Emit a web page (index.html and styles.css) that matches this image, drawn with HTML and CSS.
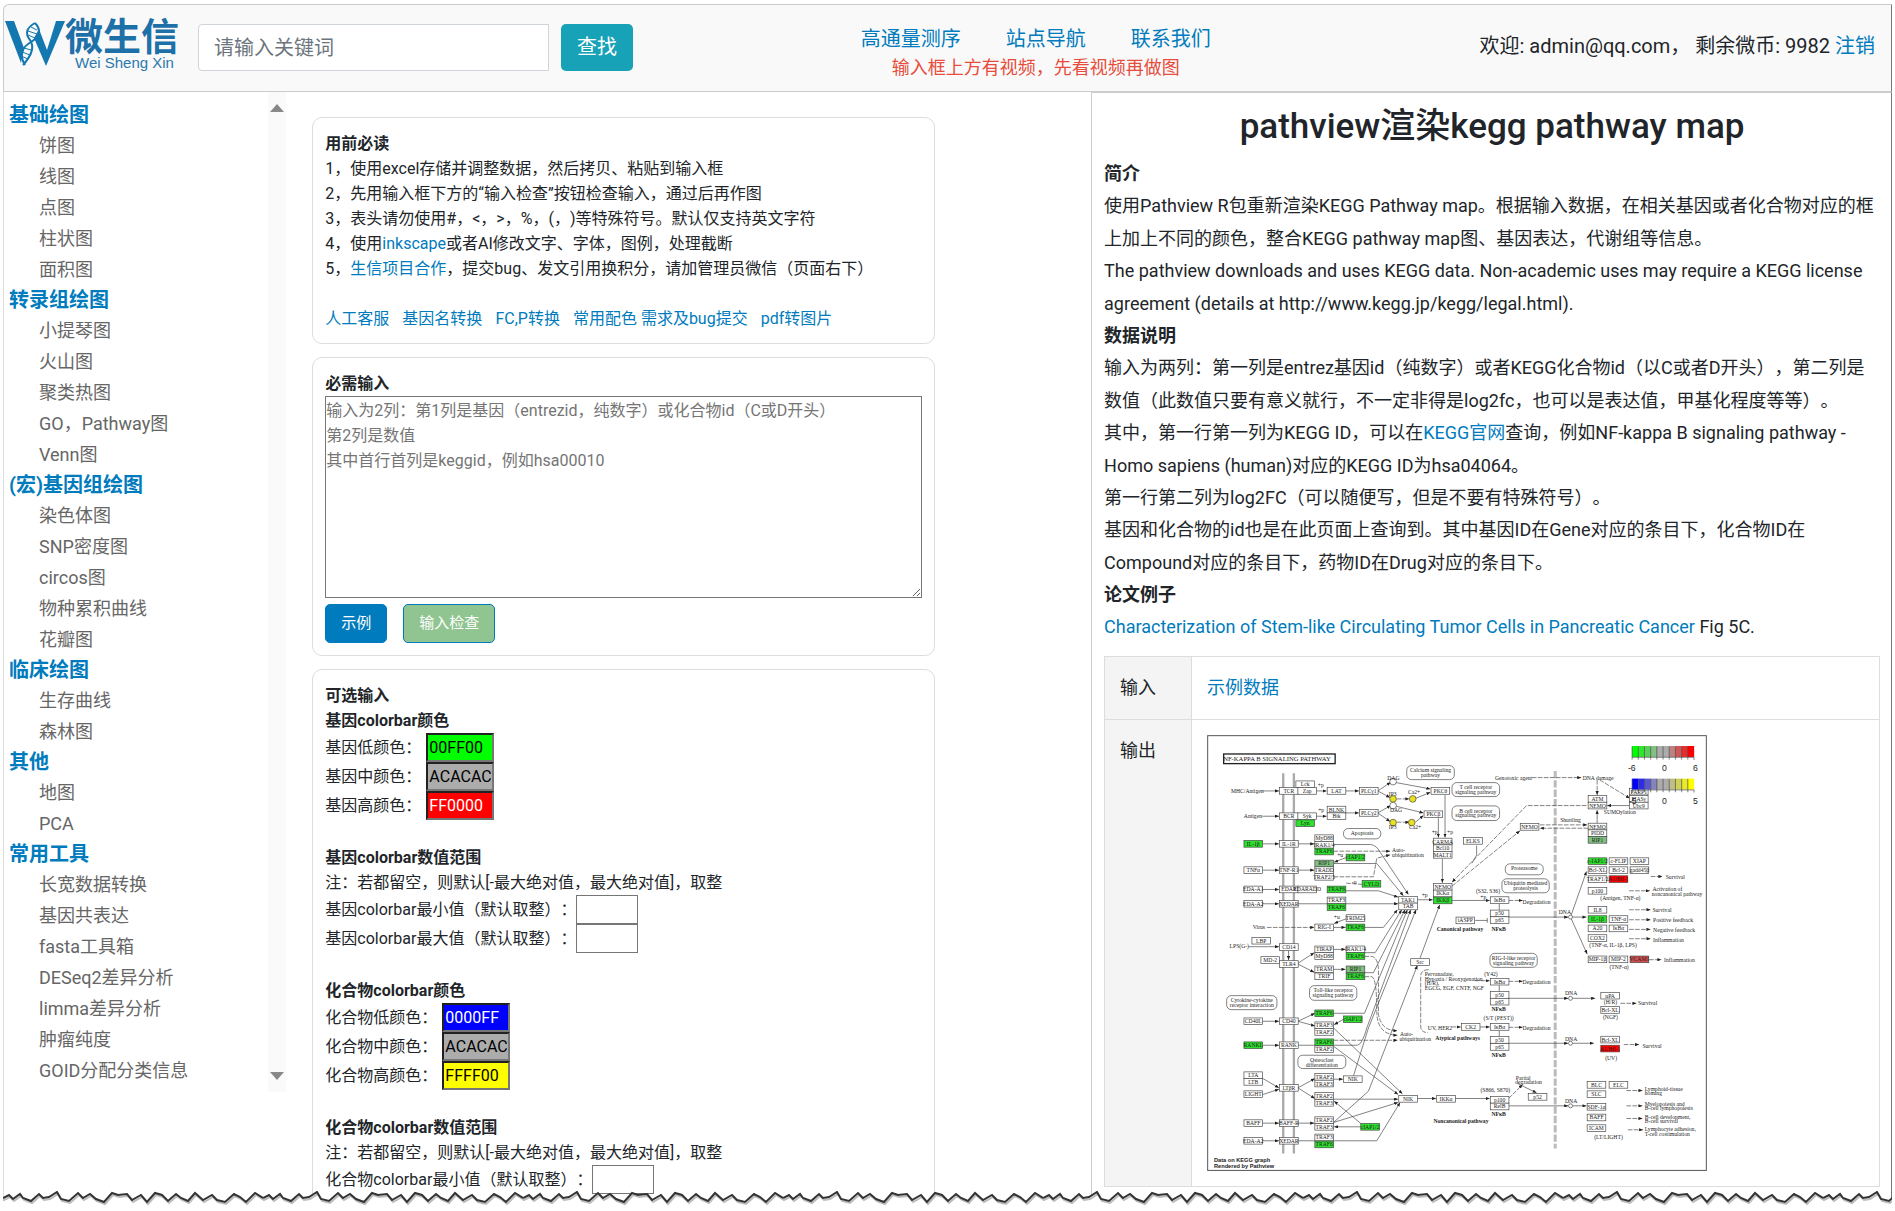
FILE: index.html
```html
<!DOCTYPE html>
<html lang="zh-CN">
<head>
<meta charset="utf-8">
<title>pathview渲染kegg pathway map</title>
<link rel="stylesheet" href="styles.css">
</head>

<body>
<header class="header">
	<a href="#" class="logo">
		<svg width="178" height="72" viewBox="0 -11 178 72" role="img" aria-label="微生信">
			<path class="logo-w" d="M1 5h9l10 27-3 15zM35 13l8 21L52 5h9L42 50 30 22z"/>
			<path class="logo-line" d="M31 7c-9 5-10 11-5 17 5 7 2 15-7 25M31 7c7 7 4 14-4 19-9 5-12 13-6 23"/>
			<path class="logo-rung" d="M27 11l6 3M24 15l9 3M24 19l7 3M20 32l7 2M18 36l8 3M17 40l7 3M18 45l4 2"/>
			<text class="logo-cn" x="61" y="34">微生信</text>
			<text class="logo-en" x="71" y="52">Wei Sheng Xin</text>
		</svg>
	</a>
	<form class="search">
		<input type="text" class="search-input" placeholder="请输入关键词" aria-label="请输入关键词">
		<button type="button" class="search-btn">查找</button>
	</form>
	<nav class="nav">
		<div class="nav-links">
			<a href="#">高通量测序</a>
			<a href="#">站点导航</a>
			<a href="#">联系我们</a>
		</div>
		<p class="nav-tip">输入框上方有视频，先看视频再做图</p>
	</nav>
	<div class="user">欢迎: admin@qq.com， 剩余微币: 9982 <a href="#">注销</a></div>
</header>

<div class="main">
	<aside class="side">
		<div class="menu">
			<h2>基础绘图</h2>
			<ul>
				<li><a href="#">饼图</a></li>
				<li><a href="#">线图</a></li>
				<li><a href="#">点图</a></li>
				<li><a href="#">柱状图</a></li>
				<li><a href="#">面积图</a></li>
			</ul>
			<h2>转录组绘图</h2>
			<ul>
				<li><a href="#">小提琴图</a></li>
				<li><a href="#">火山图</a></li>
				<li><a href="#">聚类热图</a></li>
				<li><a href="#">GO，Pathway图</a></li>
				<li><a href="#">Venn图</a></li>
			</ul>
			<h2>(宏)基因组绘图</h2>
			<ul>
				<li><a href="#">染色体图</a></li>
				<li><a href="#">SNP密度图</a></li>
				<li><a href="#">circos图</a></li>
				<li><a href="#">物种累积曲线</a></li>
				<li><a href="#">花瓣图</a></li>
			</ul>
			<h2>临床绘图</h2>
			<ul>
				<li><a href="#">生存曲线</a></li>
				<li><a href="#">森林图</a></li>
			</ul>
			<h2>其他</h2>
			<ul>
				<li><a href="#">地图</a></li>
				<li><a href="#">PCA</a></li>
			</ul>
			<h2>常用工具</h2>
			<ul>
				<li><a href="#">长宽数据转换</a></li>
				<li><a href="#">基因共表达</a></li>
				<li><a href="#">fasta工具箱</a></li>
				<li><a href="#">DESeq2差异分析</a></li>
				<li><a href="#">limma差异分析</a></li>
				<li><a href="#">肿瘤纯度</a></li>
				<li><a href="#">GOID分配分类信息</a></li>
			</ul>
		</div>
		<div class="scroll">
			<svg width="14" height="8" viewBox="0 0 14 8"><path d="M0 8L7 0l7 8z"/></svg>
			<svg width="14" height="8" viewBox="0 0 14 8"><path d="M0 0l7 8 7-8z"/></svg>
		</div>
	</aside>

	<main class="work">
		<section class="card">
			<b>用前必读</b>
			<p>1，使用excel存储并调整数据，然后拷贝、粘贴到输入框</p>
			<p>2，先用输入框下方的“输入检查”按钮检查输入，通过后再作图</p>
			<p>3，表头请勿使用#，&lt;，&gt;，%，(，)等特殊符号。默认仅支持英文字符</p>
			<p>4，使用<a href="#">inkscape</a>或者AI修改文字、字体，图例，处理截断</p>
			<p>5，<a href="#">生信项目合作</a>，提交bug、发文引用换积分，请加管理员微信（页面右下）</p>
			<p class="tools">
				<a href="#">人工客服</a>
				<a href="#">基因名转换</a>
				<a href="#">FC,P转换</a>
				<span><a href="#">常用配色</a> <a href="#">需求及bug提交</a></span>
				<a href="#">pdf转图片</a>
			</p>
		</section>

		<section class="card">
			<label for="data"><b>必需输入</b></label>
			<textarea id="data" class="data" placeholder="输入为2列：第1列是基因（entrezid，纯数字）或化合物id（C或D开头）
第2列是数值
其中首行首列是keggid，例如hsa00010"></textarea>
			<div class="btns">
				<button type="button" class="btn">示例</button>
				<button type="button" class="btn btn-check">输入检查</button>
			</div>
		</section>

		<section class="card card-last">
			<b>可选输入</b>
			<b>基因colorbar颜色</b>
			<div class="row"><label for="g1">基因低颜色：</label><input id="g1" class="color green" value="00FF00"></div>
			<div class="row"><label for="g2">基因中颜色：</label><input id="g2" class="color gray" value="ACACAC"></div>
			<div class="row"><label for="g3">基因高颜色：</label><input id="g3" class="color red" value="FF0000"></div>

			<b class="gap">基因colorbar数值范围</b>
			<p>注：若都留空，则默认[-最大绝对值，最大绝对值]，取整</p>
			<div class="row"><label for="g4">基因colorbar最小值（默认取整）：</label><input id="g4" class="num"></div>
			<div class="row"><label for="g5">基因colorbar最大值（默认取整）：</label><input id="g5" class="num"></div>

			<b class="gap">化合物colorbar颜色</b>
			<div class="row"><label for="c1">化合物低颜色：</label><input id="c1" class="color blue" value="0000FF"></div>
			<div class="row"><label for="c2">化合物中颜色：</label><input id="c2" class="color gray" value="ACACAC"></div>
			<div class="row"><label for="c3">化合物高颜色：</label><input id="c3" class="color yellow" value="FFFF00"></div>

			<b class="gap">化合物colorbar数值范围</b>
			<p>注：若都留空，则默认[-最大绝对值，最大绝对值]，取整</p>
			<div class="row"><label for="c4">化合物colorbar最小值（默认取整）：</label><input id="c4" class="num"></div>
		</section>
	</main>

	<article class="doc">
		<h1>pathview渲染kegg pathway map</h1>
		<b>简介</b>
		<p>使用Pathview R包重新渲染KEGG Pathway map。根据输入数据，在相关基因或者化合物对应的框上加上不同的颜色，整合KEGG pathway map图、基因表达，代谢组等信息。</p>
		<p>The pathview downloads and uses KEGG data. Non-academic uses may require a KEGG license agreement (details at http://www.kegg.jp/kegg/legal.html).</p>
		<b>数据说明</b>
		<p>输入为两列：第一列是entrez基因id（纯数字）或者KEGG化合物id（以C或者D开头），第二列是数值（此数值只要有意义就行，不一定非得是log2fc，也可以是表达值，甲基化程度等等）。</p>
		<p>其中，第一行第一列为KEGG ID，可以在<a href="#">KEGG官网</a>查询，例如NF-kappa B signaling pathway -<br>Homo sapiens (human)对应的KEGG ID为hsa04064。</p>
		<p>第一行第二列为log2FC（可以随便写，但是不要有特殊符号）。</p>
		<p>基因和化合物的id也是在此页面上查询到。其中基因ID在Gene对应的条目下，化合物ID在<br>Compound对应的条目下，药物ID在Drug对应的条目下。</p>
		<b>论文例子</b>
		<p><a href="#">Characterization of Stem-like Circulating Tumor Cells in Pancreatic Cancer</a> Fig 5C.</p>
		<table class="io">
			<tr><th>输入</th><td><a href="#">示例数据</a></td></tr>
			<tr><th>输出</th><td><svg id="map" class="map" viewBox="20 20 1502 1310"></svg></td></tr>
		</table>
	</article>
</div>

<svg class="torn" width="100%" height="20">
	<defs>
		<pattern id="tear" width="260" height="20" patternUnits="userSpaceOnUse">
			<path class="torn-paper" d="M0 7l6-3 4 4 7-5 3 4 8 3 8-7 4 4 6-1 8-5 4 7 8 2 9-8 5 5 7-4 6 5 8 3 8-9 6 2 9-1 5 6 9-5 6 7 8-9 7 2 6 6 8-7 5 4 7 3 7-8 8 7 9-5 5 5 8 2 9-8 6 3 6 5 9-9 8 5v13H0z"/>
			<path class="torn-shade" transform="translate(1 2)" d="M-1 7H0l6-3 4 4 7-5 3 4 8 3 8-7 4 4 6-1 8-5 4 7 8 2 9-8 5 5 7-4 6 5 8 3 8-9 6 2 9-1 5 6 9-5 6 7 8-9 7 2 6 6 8-7 5 4 7 3 7-8 8 7 9-5 5 5 8 2 9-8 6 3 6 5 9-9 8 5"/>
			<path class="torn-line" d="M0 7l6-3 4 4 7-5 3 4 8 3 8-7 4 4 6-1 8-5 4 7 8 2 9-8 5 5 7-4 6 5 8 3 8-9 6 2 9-1 5 6 9-5 6 7 8-9 7 2 6 6 8-7 5 4 7 3 7-8 8 7 9-5 5 5 8 2 9-8 6 3 6 5 9-9 8 5"/>
		</pattern>
	</defs>
	<rect width="100%" height="20" fill="url(#tear)"/>
</svg>
<script src="map.js"></script>
</body>
</html>
```
FILE: styles.css
```css
* { box-sizing: border-box; }
body { margin: 0; padding: 4px 3px 0; height: 100vh; overflow: hidden; display: flex; flex-direction: column; position: relative; background: #fff; color: #212529; font: 16px/25px Roboto, "Noto Sans CJK SC", sans-serif; text-spacing-trim: space-all; }
a { color: #007bbd; text-decoration: none; }
h1, h2, p, ul { margin: 0; padding: 0; font-weight: normal; }
ul { list-style: none; }
b { display: block; }
input, button, textarea { font: inherit; }

.header { display: flex; align-items: flex-start; flex: none; height: 88px; padding-right: 16px; background: #f9f9f9; border: 1px solid #ccc; border-right-color: #777; border-radius: 6px 0 0 0; font-size: 20px; }
.logo { display: block; }
.logo svg { display: block; }
.logo-w { fill: #1478b0; }
.logo-line { fill: none; stroke: #1478b0; stroke-width: 2; }
.logo-rung { fill: none; stroke: #1478b0; stroke-width: 1; }
.logo-cn { font: bold 38px "Noto Sans CJK SC", sans-serif; fill: #1e70a8; }
.logo-en { font: 15px "Liberation Sans", sans-serif; fill: #2b78ad; }
.search { display: flex; gap: 12px; margin: 19px 0 0 16px; }
.search-input { width: 351px; height: 47px; padding: 0 15px; background: #fff; border: 1px solid #ced4da; border-radius: 4px 0 0 4px; }
.search-input::placeholder { color: #6c757d; }
.search-btn { width: 72px; height: 47px; padding: 0; border: 0; border-radius: 5px; background: #17a2b8; color: #fff; }
.nav { flex: 1; padding: 19px 41px 0 0; text-align: center; }
.nav-links { display: flex; justify-content: center; gap: 45px; line-height: 30px; }
.nav-tip { color: #e74c3c; font-size: 18px; line-height: 28px; }
.user { padding-top: 26px; line-height: 30px; white-space: nowrap; }

.main { flex: 1; display: flex; min-height: 0; }
.side { flex: 0 0 15%; display: flex; justify-content: space-between; align-items: flex-start; border-left: 1px solid #ddd; }
.menu { padding: 8px 0 0 5px; font-size: 18px; }
.menu h2 { color: #007bbd; font-size: 20px; font-weight: bold; line-height: 30px; }
.menu li { padding-left: 30px; line-height: 31px; }
.menu li a { color: #666; }
.scroll { display: flex; flex-direction: column; justify-content: space-between; align-items: center; width: 18px; height: 1000px; padding: 12px 0; background: #fafafa; }
.scroll svg { fill: #888; }

.work { flex: 1; min-width: 0; padding: 25px 0 0 26px; }
.card { width: 80%; margin-bottom: 13px; padding: 13px 12px 12px; border: 1px solid #ddd; border-radius: 10px; }
.card-last { padding-bottom: 60px; }
.card p { white-space: nowrap; }
.card .tools { display: flex; gap: 13px; margin-top: 25px; }
.card .data { display: block; width: 100%; height: 202px; padding: 1px 0; border: 1px solid #767676; background: #fff; }
.data::placeholder { color: #757575; }
.btns { display: flex; gap: 16px; margin-top: 6px; }
.btn { height: 39px; padding: 0 15px; border: 1px solid #007bbd; border-radius: 5px; background: #007bbd; color: #fff; font-size: 15px; }
.btn-check { background: #90c490; }
.row { display: flex; align-items: center; height: 29px; white-space: nowrap; }
.row input { height: 29px; padding: 0 1px; }
.color { width: 68px; margin-left: 5px; border: 2px inset #767676; color: #000; }
.num { width: 62px; border: 1px solid #767676; background: #fff; }
.green { background: #0f0; }
.gray { background: #acacac; }
.red { background: #f00; color: #fff; }
.blue { background: #00f; color: #fff; }
.yellow { background: #ff0; }
.gap { margin-top: 25px; }

.doc { flex: 0 0 42.4%; padding: 13px 11px 0 12px; border: 1px solid #ccc; border-right-color: #777; border-bottom: 0; font-size: 18px; }
.doc h1 { margin-bottom: 10px; font-size: 35px; font-weight: 500; line-height: 42px; text-align: center; }
.doc p, .doc b { line-height: 1.8; }
.io { width: 100%; margin-top: 12px; border-collapse: collapse; line-height: 32px; }
.io th, .io td { padding: 15px; border: 1px solid #ddd; text-align: left; vertical-align: top; }
.io th { width: 87px; background: #f4f4f4; font-weight: normal; }

.map { display: block; width: 500px; max-width: 100%; font-family: "Liberation Serif", serif; font-size: 17px; fill: #222; }
.map rect, .map circle { fill: #fff; stroke: #444; stroke-width: 2; }
.map .frame { stroke: #555; stroke-width: 3; }
.map .title { stroke: #222; stroke-width: 4; }
.map .heading { font-size: 20px; }
.map .g { fill: #2de02d; }
.map .d { fill: #7fbf7f; }
.map .r { fill: #f00; }
.map .p { fill: #d05050; }
.map .y { fill: #e8e020; }
.map text { text-anchor: middle; }
.map .s { text-anchor: start; }
.map .bold { font-weight: bold; }
.map .credit { text-anchor: start; font: bold 17px "Liberation Sans", sans-serif; }
.map .scale { font: 26px "Liberation Sans", sans-serif; }
.map .line { fill: none; stroke: #444; stroke-width: 2; }
.map .dash { stroke-dasharray: 14 4; }
.map .wall { stroke: #aaa; stroke-width: 7; }
.map .core { stroke: #bbb; stroke-width: 9; stroke-dasharray: 22 6; }

.torn { position: absolute; left: 3px; bottom: 0; width: calc(100% - 6px); }
.torn-paper { fill: #fff; }
.torn-shade { fill: none; stroke: #bbb; stroke-width: 2; }
.torn-line { fill: none; stroke: #333; stroke-width: 2; }
```
FILE: map.js
```js
window.onload = function() {

	var oMap = document.getElementById('map');
	var s = '';

	// x, y, name, colour class
	var aGene = [
		[287,158,'Lck'],[238,178,'TCR'],[293,178,'Zap'],[381,178,'LAT'],[478,178,'PLCγ1'],[693,178,'PKCθ'],
		[238,254,'BCR'],[293,254,'Syk'],[287,275,'Lyn','g'],[381,234,'BLNK'],[381,254,'Btk'],[478,244,'PLCγ2'],[672,248,'PKCβ'],
		[131,337,'IL-1β','g'],[238,337,'IL-1R'],[344,320,'MyD88'],[344,340,'IRAK1/4'],[344,360,'TRAF6','g'],
		[344,396,'RIP1','d'],[344,416,'TRADD'],[344,436,'TRAF2/5'],[438,378,'cIAP1/2','g'],[131,416,'TNFα'],[238,416,'TNF-R1'],
		[131,474,'EDA-A1'],[238,474,'EDAR'],[293,474,'EDARADD'],[381,474,'TRAF6','g'],[486,457,'CYLD','g'],
		[131,517,'EDA-A2'],[238,517,'XEDAR'],[381,507,'TRAF3'],[381,527,'TRAF6','g'],
		[596,505,'TAK1'],[596,525,'TAB'],[700,330,'CARMA'],[700,350,'Bcl10'],[700,370,'MALT1'],
		[700,466,'NEMO'],[700,486,'IKKα'],[700,507,'IKKβ','g'],
		[344,588,'RIG-I'],[438,560,'TRIM25'],[438,588,'TRAF6','g'],
		[155,628,'LBP'],[238,647,'CD14'],[182,686,'MD-2'],[238,698,'TLR4'],
		[344,654,'TIRAP'],[344,674,'MyD88'],[438,654,'IRAK1/4'],[438,674,'TRAF6','g'],
		[344,714,'TRAM'],[344,735,'TRIF'],[438,714,'RIP1','d'],[438,735,'TRAF6','g'],
		[344,846,'TRAF6','g'],[430,864,'cIAP1/2','g'],[131,870,'CD40L'],[238,870,'CD40'],[344,882,'TRAF3'],[344,902,'TRAF2'],
		[131,942,'RANKL','g'],[238,942,'RANK'],[344,933,'TRAF6','g'],[344,954,'TRAF2'],
		[131,1032,'LTA'],[131,1052,'LTB'],[131,1089,'LIGHT'],[238,1070,'LTβR'],[344,1037,'TRAF2'],[344,1057,'TRAF3'],[430,1044,'NIK'],
		[344,1094,'TRAF2'],[344,1115,'TRAF3'],[131,1176,'BAFF'],[238,1176,'BAFF-R'],[344,1167,'TRAF2'],[344,1187,'TRAF3'],[482,1187,'cIAP1/2','g'],
		[131,1229,'EDA-A2'],[238,1229,'XEDAR'],[344,1219,'TRAF3'],[344,1240,'TRAF6','g'],
		[596,1103,'NIK'],[710,1103,'IKKα'],[632,692,'Src'],
		[768,567,'iASPP'],[871,506,'IκBα'],[871,546,'p50'],[871,566,'p65'],[791,328,'ELKS'],[961,286,'NEMO'],
		[1165,202,'ATM'],[1165,222,'NEMO'],[1289,180,'PARP1'],[1289,202,'PIASγ'],[1289,222,'Ubc9'],
		[1165,285,'NEMO'],[1165,305,'PIDD'],[1165,325,'RIP1','d'],
		[1165,389,'c-IAP1/2','g'],[1228,389,'c-FLIP'],[1291,389,'XIAP'],[1165,416,'Bcl-XL'],[1228,416,'Bcl-2'],[1291,416,'gadd45β'],
		[1165,443,'TRAF1/2'],[1228,443,'A1/Bfl-1','r'],[1165,478,'p100'],
		[1165,535,'IL8'],[1165,563,'IL-1β','g'],[1228,563,'TNF-α'],[1165,591,'A20'],[1228,591,'IκBα'],[1165,620,'COX2'],
		[1165,684,'MIP-1β'],[1228,684,'MIP-2'],[1291,684,'VCAM1','p'],
		[871,751,'IκBα'],[871,791,'p50'],[871,811,'p65'],[784,887,'CK2'],[871,887,'IκBα'],[871,926,'p50'],[871,947,'p65'],
		[871,1106,'p100'],[871,1126,'RelB'],[985,1097,'p52'],
		[1203,793,'uPA'],[1203,836,'Bcl-XL'],[1203,925,'Bcl-XL'],[1203,952,'A1/Bfl-1','r'],
		[1162,1061,'BLC'],[1228,1061,'ELC'],[1162,1089,'SLC'],[1162,1127,'SDF-1α'],[1162,1159,'BAFF'],[1162,1191,'ICAM']
	];

	// x, y, width, height, lines of text
	var aPath = [
		[620,112,143,42,'Calcium signaling','pathway'],
		[756,163,143,42,'T cell receptor','signaling pathway'],
		[756,233,143,44,'B cell receptor','signaling pathway'],
		[430,301,112,31,'Apoptosis'],
		[916,407,114,33,'Proteasome'],
		[906,452,142,42,'Ubiquitin mediated','proteolysis'],
		[870,676,142,42,'RIG-I-like receptor','signaling pathway'],
		[328,773,142,44,'Toll-like receptor','signaling pathway'],
		[79,803,151,42,'Cytokine-cytokine','receptor interaction'],
		[293,982,144,40,'Osteoclast','differentiation']
	];

	// solid arrows
	var aArrow = [
		'186 188H236','348 188H379','436 188H476','533 188L572 162','533 188L570 208','588 163L691 182','648 210L691 192',
		'186 264H236','348 264H379','436 254H476','533 254L572 232','533 254L570 280','588 234L670 254','646 282L670 262',
		'735 200V328','715 270V328','727 392V464',
		'188 347H236','293 347H342','400 349H512Q530 352 540 372L625 499','438 388L402 402','400 406H530L610 503',
		'188 426H236','293 426H342','188 484H236','436 488H535L594 507','188 527H236','293 527H594',
		'652 515H698','400 598H436','438 572L402 586','436 598H550L592 545','145 656H236','265 668V696',
		'293 706L342 674','293 708L342 733','400 664H436','400 724H436','493 674H525L605 545','493 734H520L615 545',
		'188 880H236','293 880L344 856','293 880L344 894','400 856H493L622 545','430 874L402 890','400 900L607 1098',
		'188 952H236','293 952H472Q486 950 500 900L632 545','400 955L594 1100','188 1052L236 1080','188 1100L236 1084',
		'293 1080L344 1052','293 1080L344 1112','400 1054H428','460 1044L505 900L648 545','400 1114H594','482 1187L402 1120',
		'188 1186H236','293 1186H342','400 1184L594 1124','400 1184L505 1090L652 712','482 1197H402',
		'188 1239H236','293 1239H530L600 1124','652 1112H708','766 1112H869','660 690L719 530',
		'756 517H869','926 567H1105','1112 567H1160','1112 567L1160 430','1112 567L1162 678','926 811H1105','1112 811H1186',
		'926 946H1105','1112 946H1182','926 1134H1105','1112 1134H1160','1289 232H1222','1192 285V246','955 1068L1010 1095','840 897H869'
	];

	// dashed arrows
	var aDash = [
		'200 598H342','400 369H570','400 446H520L530 390 570 380','438 465L500 470','590 212H628','590 282H628',
		'1192 155V200','996 148H1144','1200 155L1290 210','1160 232H980L756 462','756 474L960 308','1020 290H1162','1165 300H1020',
		'493 685H515Q535 690 535 730V860Q545 910 592 908','493 746H515Q530 750 530 850Q530 920 592 922','400 937H592',
		'926 517H968','926 760H968','926 898H968','926 1112L968 1070','825 758H869','755 897H782',
		'1353 445H1388','1288 488H1350','1288 545H1352','1288 575H1352','1288 604H1352','1288 632H1352','1348 695H1385',
		'1262 826H1310','1272 950H1318','1280 1088H1328','1280 1134H1328','1280 1172H1328','1284 1206H1330'
	];

	// x, y, text, class
	var aText = [
		[230,99,'NF-KAPPA B SIGNALING PATHWAY','heading'],[141,194,'MHC/Antigen'],[158,269,'Antigen'],[176,603,'Virus'],[117,661,'LPS(G-)'],
		[580,155,'DAG'],[588,252,'DAG'],[578,204,'IP3'],[642,196,'Ca2+'],[578,302,'IP3'],[645,302,'Ca2+'],
		[362,176,'+p'],[363,252,'+p'],[420,388,'+u'],[462,468,'-u'],[674,508,'+p'],[410,574,'+u'],[704,318,'+p'],[750,318,'+p'],
		[576,371,'Auto-','s'],[576,386,'ubiquitination','s'],[600,924,'Auto-','s'],[598,938,'ubiquitination','s'],
		[674,744,'Pervanadate,','s'],[674,758,'Hypoxia / Reoxygenation','s'],[674,772,'(H/R),','s'],[674,786,'EGCG, EGF, CNTF, NGF','s'],
		[720,906,'UV, HER2'],[780,608,'Canonical pathway','bold'],[773,935,'Atypical pathways','bold'],[783,1187,'Noncanonical pathway','bold'],
		[896,608,'NFκB','bold'],[896,848,'NFκB','bold'],[896,987,'NFκB','bold'],[896,1165,'NFκB','bold'],
		[864,496,'(S32, S36)'],[850,512,'+p'],[873,743,'(Y42)'],[896,875,'(S/T (PEST))'],[886,1092,'(S866, S870)'],
		[1010,528,'Degradation'],[1010,767,'Degradation'],[1010,906,'Degradation'],[970,1055,'Partial'],[986,1068,'degradation'],
		[1095,557,'DNA'],[1114,800,'DNA'],[1114,939,'DNA'],[1114,1125,'DNA'],
		[941,154,'Genotoxic agent'],[1195,156,'DNA damage'],[1112,281,'Shuttling'],[1260,258,'SUMOylation'],
		[1398,453,'Survival','s'],[1358,490,'Activation of','s'],[1356,504,'noncanonical pathway','s'],[1262,516,'(Antigen, TNF-α)'],
		[1358,551,'Survival','s'],[1360,581,'Positive feedback','s'],[1360,611,'Negative feedback','s'],[1360,642,'Inflammation','s'],
		[1240,658,'(TNF-α, IL-1β, LPS)'],[1258,723,'(TNF-α)'],[1393,702,'Inflammation','s'],
		[1232,829,'(H/R)'],[1232,873,'(NGF)'],[1315,832,'Survival','s'],[1234,995,'(UV)'],[1328,959,'Survival','s'],
		[1335,1088,'Lymphoid-tissue','s'],[1335,1102,'homing','s'],[1335,1135,'Myelopoiesis and','s'],[1335,1148,'B-cell lymphopoiesis','s'],
		[1335,1174,'B-cell development,','s'],[1335,1187,'B-cell survival','s'],[1335,1211,'Lymphocyte adhesion,','s'],[1335,1224,'T-cell costimulation','s'],
		[1226,1234,'(LT/LIGHT)'],[41,1302,'Data on KEGG graph','credit'],[41,1321,'Rendered by Pathview','credit'],
		[1296,128,'-6','scale'],[1394,128,'0','scale'],[1487,128,'6','scale'],[1299,226,'-5','scale'],[1394,226,'0','scale'],[1487,226,'5','scale']
	];

	function rect(x, y, w, h, cls, rx) {
		s += '<rect x="' + x + '" y="' + y + '" width="' + w + '" height="' + h + '" rx="' + (rx || 0) + '" class="' + (cls || '') + '"/>';
	}
	function text(x, y, t, cls) {
		s += '<text x="' + x + '" y="' + y + '" class="' + (cls || '') + '">' + t + '</text>';
	}
	function line(d, cls) {
		s += '<path d="M' + d + '" class="line ' + (cls || '') + '"/>';
	}

	s += '<defs><marker id="tip" viewBox="0 0 12 10" refX="12" refY="5" markerWidth="12" markerHeight="10" markerUnits="userSpaceOnUse" orient="auto"><path d="M0 0L12 5L0 10z"/></marker></defs>';
	rect(22, 22, 1498, 1306, 'frame');
	rect(70, 77, 335, 29, 'title');
	line('249 135V1277', 'wall');
	line('281 135V1277', 'wall');
	line('1066 128V1262', 'core');
	line('686 725Q662 725 662 745V895Q662 914 684 914', 'dash');
	line('830 352V380Q828 385 816 405');
	line('898 527V546');
	line('898 772V791');
	line('898 908V926');
	line('826 577H862M862 570V584');

	for (var i=0; i<aArrow.length; i++) {
		s += '<path class="line" marker-end="url(#tip)" d="M' + aArrow[i] + '"/>';
	}
	for (var i=0; i<aDash.length; i++) {
		s += '<path class="line dash" marker-end="url(#tip)" d="M' + aDash[i] + '"/>';
	}
	for (var i=0; i<aGene.length; i++) {
		rect(aGene[i][0], aGene[i][1], 56, 20, aGene[i][3]);
		text(aGene[i][0] + 28, aGene[i][1] + 16, aGene[i][2]);
	}
	for (var i=0; i<aPath.length; i++) {
		var p = aPath[i];
		rect(p[0], p[1], p[2], p[3], '', 14);
		text(p[0] + p[2]/2, p[1] + 20, p[4]);
		if (p[5]) text(p[0] + p[2]/2, p[1] + 34, p[5]);
	}

	var aDot = [[579,160],[579,212,'y'],[638,212,'y'],[579,232],[579,283,'y'],[635,283,'y']];
	for (var i=0; i<aDot.length; i++) {
		s += '<circle cx="' + aDot[i][0] + '" cy="' + aDot[i][1] + '" r="10" class="' + (aDot[i][2] || '') + '"/>';
	}
	var aDna = [567, 811, 946, 1134];
	for (var i=0; i<aDna.length; i++) {
		s += '<circle cx="1112" cy="' + aDna[i] + '" r="6"/>';
	}

	// colour keys
	var aKey = [
		[53, ['#00ff00','#2de82d','#57d057','#84bf84','#acacac','#acacac','#c08080','#d05757','#e82d2d','#ff0000']],
		[151, ['#0000ff','#2d2de8','#5757d0','#8484bf','#acacac','#acacac','#bfbf84','#d0d057','#e8e82d','#ffff00']]
	];
	for (var i=0; i<aKey.length; i++) {
		for (var j=0; j<10; j++) {
			var x = 1297 + j * 18.6;
			s += '<path fill="' + aKey[i][1][j] + '" d="M' + x + ' ' + aKey[i][0] + 'h19v33h-19z"/>';
			line(x + ' ' + (aKey[i][0] + 1) + 'v40');
		}
		line('1297 ' + (aKey[i][0] + 34) + 'h186v8');
	}
	for (var i=0; i<aText.length; i++) {
		text(aText[i][0], aText[i][1], aText[i][2], aText[i][3]);
	}

	oMap.innerHTML = s;

}
```
